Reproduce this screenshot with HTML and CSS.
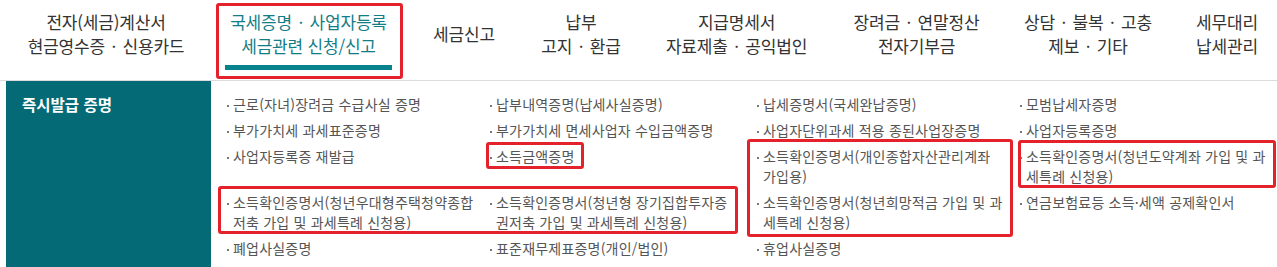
FILE: index.html
```html
<!DOCTYPE html>
<html lang="ko">
<head>
<meta charset="utf-8">
<title>국세증명 · 사업자등록</title>
<link rel="stylesheet" href="styles.css">
</head>
<body>
<div class="page">
  <nav class="gnb">
    <a class="gnb-item gi-1">전자(세금)계산서<br>현금영수증 <span class="sep">·</span> 신용카드</a>
    <a class="gnb-item gi-2 is-active">국세증명 <span class="sep">·</span> 사업자등록<br>세금관련 신청/신고</a>
    <a class="gnb-item gi-3 is-single">세금신고</a>
    <a class="gnb-item gi-4">납부<br>고지 <span class="sep">·</span> 환급</a>
    <a class="gnb-item gi-5">지급명세서<br>자료제출 <span class="sep">·</span> 공익법인</a>
    <a class="gnb-item gi-6">장려금 <span class="sep">·</span> 연말정산<br>전자기부금</a>
    <a class="gnb-item gi-7">상담 <span class="sep">·</span> 불복 <span class="sep">·</span> 고충<br>제보 <span class="sep">·</span> 기타</a>
    <a class="gnb-item gi-8">세무대리<br>납세관리</a>
  </nav>

  <section class="menu">
    <h2 class="menu-title">즉시발급 증명</h2>
    <ul class="menu-list">
      <li>근로(자녀)장려금 수급사실 증명</li>
      <li>납부내역증명(납세사실증명)</li>
      <li>납세증명서(국세완납증명)</li>
      <li>모범납세자증명</li>

      <li>부가가치세 과세표준증명</li>
      <li>부가가치세 면세사업자 수입금액증명</li>
      <li>사업자단위과세 적용 종된사업장증명</li>
      <li>사업자등록증명</li>

      <li>사업자등록증 재발급</li>
      <li>소득금액증명</li>
      <li>소득확인증명서(개인종합자산관리계좌<br>가입용)</li>
      <li>소득확인증명서(청년도약계좌 가입 및 과<br>세특례 신청용)</li>

      <li>소득확인증명서(청년우대형주택청약종합<br>저축 가입 및 과세특례 신청용)</li>
      <li>소득확인증명서(청년형 장기집합투자증<br>권저축 가입 및 과세특례 신청용)</li>
      <li>소득확인증명서(청년희망적금 가입 및 과<br>세특례 신청용)</li>
      <li>연금보험료등 소득·세액 공제확인서</li>

      <li>폐업사실증명</li>
      <li>표준재무제표증명(개인/법인)</li>
      <li>휴업사실증명</li>
    </ul>
  </section>

  <div class="mark mark-nav"></div>
  <div class="mark mark-income"></div>
  <div class="mark mark-col3"></div>
  <div class="mark mark-col4"></div>
  <div class="mark mark-row4"></div>
</div>
</body>
</html>
```

FILE: styles.css
```css
* { box-sizing: border-box; }

html, body {
  margin: 0;
  padding: 0;
  background: #fff;
  overflow: hidden;
}

body {
  font-family: "Noto Sans CJK KR", "Noto Sans", sans-serif;
  color: #333;
}

.page {
  position: relative;
  width: 1277px;
}

/* ---------- top navigation ---------- */
.gnb {
  display: flex;
  height: 81px;
  border-bottom: 1px solid #dcdcdc;
}

.gnb-item {
  display: block;
  flex: none;
  padding-top: 10px;
  font-size: 17px;
  line-height: 24px;
  letter-spacing: -0.2px;
  color: #333;
  text-align: center;
  text-decoration: none;
  white-space: nowrap;
}

.gnb-item .sep { margin: 0 2px; }

.gnb-item.is-single { padding-top: 22px; }

.gnb-item.is-active { color: #137d87; }
.gnb-item.is-active::after {
  content: "";
  display: block;
  width: 167px;
  height: 5px;
  margin: 7px auto 0;
  background: #08828d;
}

.gi-1 { width: 212px; }
.gi-2 { width: 193px; }
.gi-3 { width: 118px; }
.gi-4 { width: 116px; }
.gi-5 { width: 195px; }
.gi-6 { width: 165px; }
.gi-7 { width: 178px; }
.gi-8 { width: 100px; }

/* ---------- menu body ---------- */
.menu {
  display: flex;
  align-items: stretch;
}

.menu-title {
  flex: none;
  width: 205px;
  margin: 0 0 0 6px;
  padding: 13px 0 0 16px;
  background: #036a76;
  color: #fff;
  font-size: 15.5px;
  line-height: 20px;
  font-weight: 700;
}

.menu-list {
  flex: 1;
  display: grid;
  grid-template-columns: 263px 267px 263px 1fr;
  row-gap: 6px;
  align-items: start;
  margin: 0;
  padding: 13px 0 30px 16px;
  list-style: none;
}

.menu-list li {
  padding-left: 6px;
  text-indent: -6px;
  font-size: 14px;
  line-height: 20px;
  letter-spacing: 0.2px;
  color: #555;
  white-space: nowrap;
}

.menu-list li::before {
  content: "";
  display: inline-block;
  width: 2px;
  height: 2px;
  margin-right: 4px;
  vertical-align: middle;
  background: #777;
}

/* ---------- red annotation boxes (overlays) ---------- */
.mark {
  position: absolute;
  border: 3px solid #e4222b;
  border-radius: 3px;
  pointer-events: none;
}

.mark-nav    { left: 216px;  top: 3px;   width: 187px; height: 76px; }
.mark-income { left: 486px;  top: 142px; width: 98px;  height: 27px; }
.mark-col3   { left: 747px;  top: 139px; width: 266px; height: 98px; }
.mark-col4   { left: 1018px; top: 140px; width: 258px; height: 48px; }
.mark-row4   { left: 218px;  top: 186px; width: 520px; height: 48px; }
```
